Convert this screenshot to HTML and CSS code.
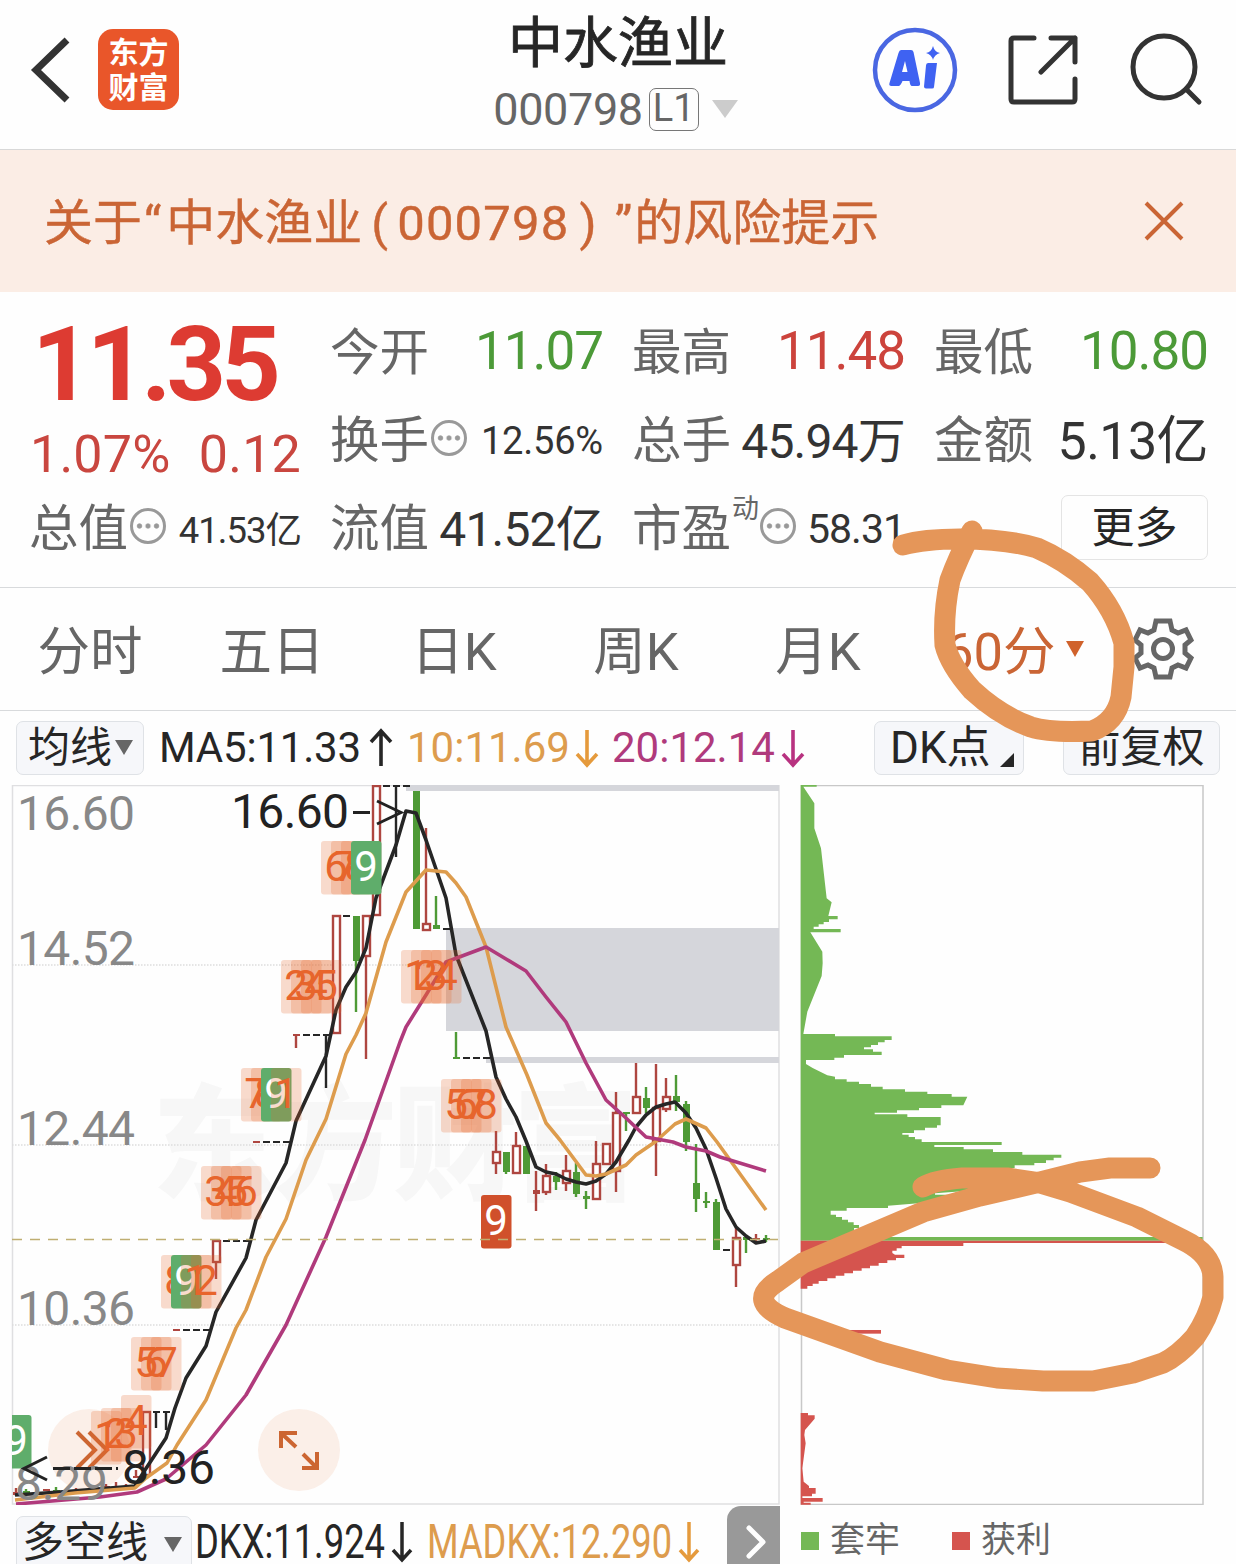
FILE: index.html
```html
<!DOCTYPE html>
<html lang="zh-CN">
<head>
    <meta charset="UTF-8">
    <meta name="viewport" content="width=device-width, initial-scale=1.0">
    <title>中水渔业 000798</title>
    <link rel="stylesheet" href="styles.css">
</head>
<body>
    <div class="page">
        <header class="header">
            <div class="header-left">
                <svg class="back" width="44" height="70" viewBox="0 0 44 70"><path d="M41 5 10 35l31 30" /></svg>
                <div class="logo"><span>东方</span><span>财富</span></div>
            </div>
            <div class="header-title">
                <h1>中水渔业</h1>
                <div class="code">
                    <span class="code-number">000798</span>
                    <span class="level">L1</span>
                    <svg width="26" height="18" viewBox="0 0 26 18"><path d="M0 0h26L13 18z" fill="#ccc" /></svg>
                </div>
            </div>
            <div class="header-right">
                <svg width="86" height="86" viewBox="0 0 86 86">
                    <circle cx="43" cy="43" r="40" fill="none" stroke="#4a67e2" stroke-width="4.5" />
                    <path d="M29 23h10q2 0 2.500 2l6.500 31q.500 3-2 3h-6q-2 0-2.500-5h-7q-2 5-4 5h-7q-3 0-2-3l9-30q1-3 2.500-3zm4 11-3 11h5.500z" fill="#3f62f2" fill-rule="evenodd" />
                    <path d="M56 36h9l-3 24q0 1.500-2 1.500h-6q-2 0-2-2l2-21q0-2.500 2-2.500z" fill="#3f62f2" />
                    <path d="M61 19q1.500 6 7 7-5.500 1.500-7 7-1.500-5.500-7-7 5.500-1 7-7z" fill="#3f62f2" />
                </svg>
                <svg class="share" width="72" height="72" viewBox="0 0 72 72">
                    <path d="M27 4H7q-3 0-3 3v58q0 3 3 3h58q3 0 3-3V45M44 4h24v24M68 4 34 38" />
                </svg>
                <svg class="search" width="74" height="74" viewBox="0 0 74 74">
                    <circle cx="35" cy="34" r="31" /><path d="m57 56 13 13" />
                </svg>
            </div>
        </header>

        <section class="notice">
            <p>关于<span class="open-quote">“</span>中水渔业<span class="paren">(</span><span class="notice-code">000798</span><span class="paren-end">)</span><span class="close-quote">”</span>的风险提示</p>
            <svg width="40" height="40" viewBox="0 0 40 40"><path d="m2 2 36 36M38 2 2 38" /></svg>
        </section>

        <section class="quote">
            <div class="price-block">
                <div class="price">11.35</div>
                <div class="change"><span>1.07%</span><span>0.12</span></div>
            </div>
            <div class="item"><label>今开</label><b class="green">11.07</b></div>
            <div class="item"><label>最高</label><b class="red">11.48</b></div>
            <div class="item"><label>最低</label><b class="green">10.80</b></div>
            <div class="item"><label>换手</label><i class="more-dot"></i><b class="small">12.56%</b></div>
            <div class="item"><label>总手</label><b class="medium">45.94万</b></div>
            <div class="item"><label>金额</label><b class="large">5.13亿</b></div>
            <div class="item"><label>总值</label><i class="more-dot"></i><b class="small tight">41.53亿</b></div>
            <div class="item"><label>流值</label><b class="medium">41.52亿</b></div>
            <div class="item"><label>市盈<sup>动</sup></label><i class="more-dot pe"></i><b class="small pe-value">58.31</b></div>
            <div class="item last"><button type="button" class="more">更多</button></div>
        </section>

        <nav class="tabs">
            <a>分时</a>
            <a>五日</a>
            <a>日K</a>
            <a>周K</a>
            <a>月K</a>
            <a class="active">60分<svg width="18" height="18" viewBox="0 0 18 18"><path d="M0 1h18L9 17z" fill="#d0622c" /></svg></a>
            <svg class="gear" width="62" height="62" viewBox="-31 -31 62 62">
                <path d="M-7-28H7L9-19 15-16 23-19 28-9 22-4V4L28 9 23 19 15 16 9 19 7 28H-7L-9 19-15 16-23 19-28 9-22 4V-4L-28-9-23-19-15-16-9-19z" />
                <circle r="9.500" />
            </svg>
        </nav>

        <div class="indicators">
            <button type="button" class="chip ma-chip"><span>均线</span><svg width="18" height="16" viewBox="0 0 18 16"><path d="M0 0h18L9 15z" fill="#666" /></svg></button>
            <span class="ma ma5">MA5:11.33</span>
            <svg class="arrow" width="24" height="40" viewBox="0 0 24 40"><path d="M12 38V3M2 14 12 3l10 11" stroke="#262626" /></svg>
            <span class="ma ma10">10:11.69</span>
            <svg class="arrow" width="24" height="40" viewBox="0 0 24 40"><path d="M12 2v35M2 26l10 11 10-11" stroke="#e59a3c" /></svg>
            <span class="ma ma20">20:12.14</span>
            <svg class="arrow" width="24" height="40" viewBox="0 0 24 40"><path d="M12 2v35M2 26l10 11 10-11" stroke="#b83280" /></svg>
            <button type="button" class="chip dk-chip"><span>DK点</span><svg width="14" height="14" viewBox="0 0 14 14"><path d="M14 0v14H0z" fill="#262626" /></svg></button>
            <button type="button" class="chip fq-chip">前复权</button>
        </div>

        <div class="charts">
            <svg class="kline" width="780" height="720" viewBox="0 785 780 720">
                <clipPath id="plot"><rect x="12" y="785" width="768" height="720" /></clipPath>
                <text class="watermark" x="152" y="1190" textLength="486">东方财富</text>
                <path class="frame" d="M12.500 785.500H779V1504H12.500z" />
                <path class="grid" d="M12 965H779M12 1145H779M12 1325H779" />
                <g fill="#d5d6db">
                    <rect x="406" y="785" width="373" height="6" />
                    <rect x="446" y="928" width="333" height="103" />
                    <rect x="486" y="1057" width="293" height="6" />
                </g>
                <g class="round-btn">
                    <circle cx="89" cy="1450" r="41" /><circle cx="299" cy="1450" r="41" />
                    <path d="m77 1432 18 18-18 18M89 1432l18 18-18 18M281 1448v-15h16M281 1433l15 14M302 1468h15v-16M317 1468l-14-14" />
                </g>
                <g id="candles"></g>
                <polyline class="line" stroke="#262626" points="15,1495 60,1492 135,1486 145,1470 166,1438 175,1408 186,1378 206,1346 216,1312 246,1258 256,1220 286,1163 296,1121 326,1056 336,1010 346,987 356,972 366,948 376,898 396,845 406,811 416,813 426,840 446,898 456,955 486,1031 496,1077 506,1099 516,1117 526,1141 536,1167 546,1172 556,1174 566,1179 576,1182 586,1184 596,1181 606,1174 616,1162 629,1140 636,1127 646,1115 656,1107 666,1104 675,1102 686,1113 696,1128 706,1149 716,1178 726,1209 736,1227 746,1236 756,1243 766,1241" />
                <polyline class="line" stroke="#dd9c4d" points="15,1500 75,1493 135,1488 146,1478 167,1463 177,1445 206,1400 236,1328 246,1310 266,1257 286,1219 306,1160 326,1119 346,1054 356,1035 366,1013 386,942 406,892 426,870 446,872 456,883 466,897 486,947 506,1027 527,1075 546,1123 560,1140 586,1175 596,1176 606,1174 626,1165 636,1155 655,1142 675,1124 686,1119 706,1128 717,1142 766,1210" />
                <polyline class="line" stroke="#b03a7c" points="16,1504 100,1497 137,1492 166,1479 206,1445 246,1395 286,1325 326,1237 365,1140 400,1042 406,1027 426,995 446,962 486,947 506,959 526,971 546,997 566,1022 586,1063 606,1100 626,1118 646,1137 673,1142 686,1147 706,1151 720,1157 766,1171" />
                <g id="signals" clip-path="url(#plot)"></g>
                <path class="last-price" d="M12 1239.500H779" />
                <g class="axis">
                    <text x="17" y="829.500" textLength="118">16.60</text>
                    <text x="17" y="964.500" textLength="118">14.52</text>
                    <text x="17" y="1144.500" textLength="118">12.44</text>
                    <text x="17" y="1324.500" textLength="118">10.36</text>
                    <text x="15" y="1500" textLength="93">8.29</text>
                </g>
                <g class="extreme">
                    <text x="231" y="828" textLength="118">16.60</text>
                    <text x="122" y="1484" textLength="93">8.36</text>
                    <path d="M353 812.500h17M377 801l24 11.500L377 824M47 1457l-23 11.500L47 1480" />
                    <path d="M53 1468.500h65" stroke-dasharray="17 4" />
                </g>
            </svg>
            <svg class="profile" width="456" height="720" viewBox="780 785 456 720">
                <path d="M801.500 785.500H1203V1504.500H801.500z" fill="none" stroke="#c8c8c8" stroke-width="1.500" />
                <!-- cost distribution, drawn on a grid three times finer than the panel -->
                <g transform="translate(780 780) scale(.33333)">
                    <polygon fill="#74b855" points="62,15 110,15 110,20 70,20 103,70 103,145 123,205 140,355 155,367 145,408 173,408 173,418 147,418 147,426 131,426 131,433 116,433 116,440 101,440 101,447 182,447 182,457 91,457 127,515 128,550 125,588 82,695 70,762 165,762 165,769 335,769 335,780 314,780 314,787 294,787 294,795 273,795 273,802 252,802 252,808 279,808 279,815 305,815 305,825 192,825 192,833 163,833 163,840 78,840 78,852 98,864 142,886 165,890 165,898 200,898 200,905 237,905 237,912 273,912 273,920 308,920 308,928 375,928 375,935 442,935 442,942 515,942 515,950 562,950 550,976 484,976 484,984 417,984 417,991 351,991 351,998 284,998 284,1003 382,1003 382,1011 482,1011 482,1036 471,1036 471,1043 435,1043 435,1051 402,1051 402,1059 367,1059 367,1064 386,1064 386,1071 405,1071 405,1078 425,1078 425,1086 665,1086 665,1095 463,1095 463,1101 551,1101 551,1108 639,1108 639,1116 727,1116 727,1124 844,1124 844,1133 821,1133 821,1141 798,1141 798,1149 763,1149 763,1156 704,1156 704,1164 640,1170 600,1226 567,1226 567,1232 465,1240 465,1244 507,1244 507,1252 415,1270 324,1277 324,1284 200,1284 200,1292 152,1292 152,1304 168,1304 168,1311 186,1311 186,1319 204,1319 204,1327 221,1327 221,1335 237,1335 237,1344 222,1344 222,1352 230,1371 1268,1371 1268,1382 62,1382" />
                    <g fill="#d5544e">
                        <polygon points="62,1382 1268,1382 1268,1389 550,1389 550,1398 365,1398 365,1405 350,1405 350,1412 337,1412 337,1419 345,1424 373,1424 373,1434 348,1434 348,1441 322,1441 322,1449 296,1449 296,1457 270,1457 270,1465 245,1465 245,1472 219,1472 219,1480 193,1480 193,1487 167,1487 167,1495 142,1495 142,1503 116,1503 116,1511 98,1511 98,1518 82,1518 82,1526 62,1526" />
                        <rect x="62" y="1650" width="241" height="11" />
                        <polygon points="62,1899 84,1899 84,1906 104,1906 104,1916 75,1950 73,1965 77,1990 67,2065 71,2105 87,2118 87,2124 107,2124 107,2141 96,2141 96,2149 67,2149 67,2154 128,2154 128,2165 71,2165 71,2168 92,2168 92,2174 62,2174" />
                    </g>
                </g>
            </svg>
        </div>

        <footer class="footer">
            <button type="button" class="chip dkx-chip"><span>多空线</span><svg width="18" height="16" viewBox="0 0 18 16"><path d="M0 0h18L9 15z" fill="#666" /></svg></button>
            <svg class="dkx" width="535" height="59" viewBox="192 1505 535 59">
                <text x="195" y="1558" textLength="190" lengthAdjust="spacingAndGlyphs" fill="#262626">DKX:11.924</text>
                <path d="M402 1522v37M393 1550l9 10 9-10" stroke="#262626" />
                <text x="427" y="1558" textLength="245" lengthAdjust="spacingAndGlyphs" fill="#dd9c4d">MADKX:12.290</text>
                <path d="M689 1522v37M680 1550l9 10 9-10" stroke="#e59a3c" />
            </svg>
            <div class="next"><svg width="20" height="34" viewBox="0 0 20 34"><path d="m3 3 14 14L3 31" /></svg></div>
            <div class="legend">
                <span><i class="box box-green"></i>套牢</span>
                <span><i class="box box-red"></i>获利</span>
            </div>
        </footer>

        <svg class="marker" width="1236" height="1564" viewBox="0 0 1236 1564">
            <path d="M903 545Q924 539 960 539 1007 539 1037 548 1065 560 1090 582 1115 610 1124 643V667L1121 697Q1116 722 1092 731 1050 733 1031 727 1000 716 972 690 950 665 945 645 943 613 950 580 958 558 972 531" />
            <path d="M923 1187Q935 1180 962 1178H1007L1040 1183 1070 1192 1137 1217 1183 1240Q1212 1254 1213 1277V1297Q1208 1318 1195 1337 1178 1356 1163 1363L1133 1373 1093 1381H1043L997 1378 947 1370 880 1352 785 1318Q746 1301 778 1281L803 1263 923 1212 980 1196 1040 1182 1080 1172 1110 1168H1150" />
        </svg>
    </div>
    <script src="chart.js"></script>
</body>
</html>
```

FILE: styles.css
```css
* { box-sizing: border-box; }
body { margin: 0; background: #fefefe; color: #333; font-family: Roboto, "Noto Sans CJK SC", sans-serif; }
button { font-family: inherit; color: #262626; }
svg { display: block; flex: none; }
.page { position: relative; width: 1236px; height: 1564px; overflow: hidden; }

/* header */
.header { height: 150px; display: grid; grid-template-columns: 1fr auto 1fr; border-bottom: 1px solid #d8d8d8; }
.header-left { display: flex; align-items: center; gap: 28px; padding: 0 0 10px 26px; }
.back path { fill: none; stroke: #333; stroke-width: 7; }
.logo { width: 81px; height: 81px; border-radius: 15px; background: #e9562a; color: #fff; font-size: 30px; font-weight: 700; line-height: 35px; display: flex; flex-direction: column; align-items: center; justify-content: center; }
.header-title { display: flex; flex-direction: column; align-items: center; padding-right: 3px; }
.header-title h1 { margin: 4px 0 0 3px; font-size: 55px; font-weight: 400; line-height: 79px; color: #262626; -webkit-text-stroke: 0.8px #262626; }
.code { display: flex; align-items: center; height: 52px; margin-right: 2px; color: #666; }
.code-number { font-size: 45px; letter-spacing: -0.4px; }
.level { width: 50px; height: 43px; margin: 0 13px 0 6px; border: 1.5px solid #777; border-radius: 7px; font-size: 38px; line-height: 38px; text-align: center; }
.header-right { display: flex; align-items: center; justify-content: flex-end; padding: 0 33px 10px 0; }
.share { margin: 0 50px 0 49px; }
.share path, .search { fill: none; stroke: #333; stroke-width: 5; stroke-linecap: round; stroke-linejoin: round; }

/* risk notice */
.notice { height: 142px; display: flex; align-items: center; justify-content: space-between; padding: 0 52px 0 44px; background: #fbede5; color: #ca6535; }
.notice p { margin: 0 0 5px; font-size: 49px; -webkit-text-stroke: 0.4px #ca6535; white-space: nowrap; }
.notice-code { letter-spacing: 1.2px; }
.open-quote { margin: 0 5px 0 2px; }
.paren { margin: 0 9px 0 9px; }
.paren-end { margin: 0 18px 0 10px; }
.close-quote { margin-right: 2px; }
.notice path { stroke: #ca6535; stroke-width: 4; }

/* quote */
.quote { height: 296px; display: grid; grid-template-columns: 271px 272px 272px 273px; grid-template-rows: 88px 88px 88px; column-gap: 30px; padding: 15px 28px 0 30px; border-bottom: 1px solid #d8dadc; }
.price-block { grid-row: span 2; color: #dd3b32; }
.price { padding: 2px 0 0 2px; font-size: 104px; font-weight: 700; line-height: 112px; letter-spacing: -5px; }
.change { display: flex; justify-content: space-between; font-size: 52px; line-height: 68px; color: #c9463f; letter-spacing: 0.2px; }
.item { display: flex; align-items: center; }
.item label { margin-bottom: 5px; font-size: 49.5px; color: #666; position: relative; left: -1px; white-space: nowrap; }
.item sup { position: absolute; left: 100px; top: 0; font-size: 27px; line-height: 40px; }
.item b { margin-left: auto; font-size: 53px; font-weight: 400; letter-spacing: -1px; white-space: nowrap; }
.item .small { font-size: 38px; letter-spacing: -0.2px; margin-top: 3px; }
.item .tight { margin-bottom: 3px; font-size: 36.5px; letter-spacing: -1px; }
.item .medium { margin-bottom: 5px; font-size: 48px; letter-spacing: -0.8px; }
.item .large { margin-bottom: 5px; font-size: 52px; letter-spacing: -0.6px; }
.item .pe-value { font-size: 41px; letter-spacing: -1px; }
.green { color: #4c9a38; }
.red { color: #cc433c; }
.more-dot { width: 36px; height: 36px; margin: 0 0 2px 1px; border: 3px solid #999; border-radius: 50%; background: radial-gradient(circle, #999 2.200px, transparent 3px) center / 8.500px 30px repeat-x content-box; padding: 0 2px; }
.more-dot.pe { margin-left: 28px; }
.last { justify-content: flex-end; }
.more { width: 147px; height: 65px; margin-top: 1px; border: 1.5px solid #e4e4e4; border-radius: 7px; background: transparent; font-size: 43px; line-height: 58px; padding: 0; }

/* period tabs */
.tabs { height: 123px; display: flex; align-items: center; border-bottom: 1px solid #d8dadc; color: #666; font-size: 52.5px; }
.tabs a { width: 182px; padding: 0 2px 4px 0; text-align: center; }
.tabs .active { width: 223px; padding-left: 34px; display: flex; align-items: center; gap: 10px; color: #ca6535; }
.active svg { margin-top: 4px; }
.gear { fill: none; stroke: #666; stroke-width: 5; margin-left: -1px; }

/* moving averages */
.indicators { height: 74px; display: flex; align-items: center; padding: 0 16px; }
.chip { flex: none; height: 54px; display: flex; align-items: center; padding: 0; border: 1.5px solid #dfe2e6; border-radius: 7px; background: #f6f7fa; font-size: 42px; line-height: 50px; }
.ma-chip { width: 128px; padding-left: 11px; gap: 3px; }
.ma { font-size: 42px; line-height: 50px; white-space: nowrap; }
.ma5 { width: 210px; margin-left: 15px; color: #262626; letter-spacing: -0.2px; }
.ma10 { width: 168px; margin-left: 14px; color: #dd9c4d; }
.ma20 { width: 169px; margin-left: 13px; color: #b03a7c; }
.arrow path { fill: none; stroke-width: 3.600; }
.dk-chip { width: 150px; margin-left: 69px; padding-left: 15px; font-size: 44px; }
.dk-chip svg { margin: 24px 0 0 10px; }
.fq-chip { width: 157px; margin-left: auto; justify-content: center; }

/* charts */
.charts { display: flex; height: 720px; }
.kline text { font-size: 48px; }
.kline .watermark { font-size: 125px; font-weight: 900; fill: #f7f7f7; }
.frame { fill: none; stroke: #dfdfe1; stroke-width: 1.500; }
.grid { stroke: #ddd; stroke-width: 1.500; stroke-dasharray: 1.500 1.500; }
.line { fill: none; stroke-width: 3.600; stroke-linejoin: round; }
.last-price { stroke: #bfae72; stroke-width: 1.300; stroke-dasharray: 10 8; }
.axis { fill: #888; }
.extreme { fill: #222; }
.extreme path { fill: none; stroke: #222; stroke-width: 3; }
.round-btn circle { fill: #fbefe8; }
.round-btn path { fill: none; stroke: #cc6632; stroke-width: 4; }
.kline .signal { font-size: 42px; text-anchor: middle; }

/* footer */
.footer { height: 59px; display: flex; }
.dkx-chip { width: 176px; height: 60px; margin: 11px 0 0 16px; padding: 0 0 6px 5px; gap: 16px; }
.dkx-chip svg { margin-top: 4px; }
.dkx text { font-size: 48px; }
.dkx path { fill: none; stroke-width: 3.500; }
.next { width: 53px; padding: 19px 0 0 19px; margin-top: 1px; border-top-left-radius: 14px; background: #999; }
.next path { fill: none; stroke: #fff; stroke-width: 5; stroke-linecap: round; stroke-linejoin: round; }
.legend { display: flex; gap: 52px; padding: 13px 0 0 21px; font-size: 35px; line-height: 50px; color: #666; }
.legend span { display: flex; align-items: center; gap: 11px; }
.box { width: 18px; height: 18px; }
.box-green { background: #74b855; }
.box-red { background: #d5544e; }

/* hand-drawn marks lie over everything */
.marker { position: absolute; left: 0; top: 0; }
.marker path { fill: none; stroke: #e59659; stroke-width: 21; stroke-linecap: round; stroke-linejoin: round; }
```

FILE: chart.js
```js
const SVG_NS = 'http://www.w3.org/2000/svg';
const colors = { r: '#ae4640', g: '#4e9a36', k: '#262626' };

// [x, type, wick top, body top, body bottom, wick bottom]
const candles = [
    [16, 'r', 1488, 1492, 1495, 1496], [26, 'g', 1489, 1491, 1493, 1495], [46, 'r', 1489, 1489, 1491, 1491],
    [56, 'g', 1487, 1490, 1492, 1493], [76, 'r', 1488, 1490, 1492, 1492], [106, 'r', 1484, 1486, 1488, 1488],
    [116, 'r', 1482, 1486, 1488, 1490], [126, 'r', 1484, 1486, 1488, 1488], [136, 'r', 1470, 1476, 1478, 1478],
    [146, 'r', 1411, 1411, 1475, 1475], [156, 'k', 1411, 1411, 1413, 1428], [166, 'k', 1411, 1411, 1413, 1430],
    [176, 'r', 1329, 1329, 1331, 1331],
    [216, 'r', 1240, 1240, 1262, 1279], [256, 'r', 1141, 1141, 1143, 1143],
    [296, 'r', 1034, 1034, 1036, 1048], [326, 'k', 1034, 1034, 1036, 1088],
    [336, 'r', 915, 915, 1033, 1033], [356, 'g', 916, 916, 961, 1012], [366, 'r', 915, 915, 956, 1059],
    [376, 'r', 785, 785, 915, 915], [396, 'k', 785, 785, 787, 857],
    [416, 'g', 791, 791, 929, 929], [426, 'r', 828, 923, 930, 930], [436, 'g', 896, 925, 929, 929],
    [456, 'g', 1032, 1057, 1059, 1059], [496, 'r', 1131, 1151, 1163, 1174], [506, 'g', 1152, 1152, 1172, 1174],
    [516, 'r', 1132, 1145, 1173, 1174], [526, 'g', 1146, 1146, 1174, 1174], [536, 'r', 1171, 1190, 1194, 1211],
    [546, 'r', 1164, 1175, 1192, 1195], [556, 'g', 1172, 1176, 1182, 1190], [566, 'r', 1155, 1170, 1183, 1191],
    [576, 'g', 1163, 1172, 1194, 1197], [586, 'g', 1191, 1196, 1199, 1209], [596, 'r', 1141, 1163, 1199, 1199],
    [606, 'r', 1143, 1143, 1164, 1165], [616, 'r', 1092, 1112, 1171, 1192], [626, 'g', 1112, 1112, 1114, 1131],
    [636, 'r', 1063, 1096, 1113, 1113], [646, 'g', 1087, 1098, 1108, 1113], [656, 'r', 1064, 1107, 1141, 1176],
    [666, 'r', 1078, 1096, 1109, 1112], [676, 'g', 1075, 1096, 1102, 1111], [686, 'g', 1101, 1104, 1142, 1151],
    [696, 'g', 1144, 1183, 1199, 1212], [706, 'g', 1192, 1201, 1203, 1208], [716, 'g', 1199, 1202, 1250, 1250],
    [736, 'r', 1228, 1237, 1265, 1287], [746, 'g', 1237, 1237, 1240, 1253],
    [756, 'r', 1234, 1238, 1240, 1242], [766, 'g', 1235, 1238, 1240, 1242]
];

// flat candles: first x, last x, y
const flats = [
    [186, 206, 1330], [226, 246, 1241], [266, 286, 1142], [306, 316, 1035], [346, 346, 916],
    [386, 386, 786], [406, 406, 786], [446, 446, 929], [466, 486, 1058], [726, 726, 1250]
];

// [left, top, digit, colour]
const signals = [
    [1, 1415, '9', 'green'],
    [91, 1411, '1'], [101, 1408, '2'], [111, 1408, '3'], [121, 1395, '4'],
    [131, 1337, '5'], [141, 1337, '6'], [151, 1337, '7'],
    [161, 1255, '8'], [171, 1255, '9', 'green'], [181, 1255, '1'], [191, 1255, '2'],
    [201, 1166, '3'], [211, 1166, '4'], [221, 1166, '5'], [231, 1166, '6'],
    [241, 1068, '7'], [251, 1068, '8'], [261, 1068, '9', 'green'], [271, 1068, '1'],
    [281, 960, '2'], [291, 960, '3'], [301, 960, '4'], [311, 960, '5'],
    [321, 841, '6'], [331, 841, '7'], [341, 841, '8'], [351, 841, '9', 'green'],
    [401, 950, '1'], [411, 950, '2'], [421, 950, '3'], [431, 950, '4'],
    [441, 1079, '5'], [451, 1079, '6'], [461, 1079, '7'], [471, 1079, '8'],
    [481, 1195, '9', 'red']
];

function add(parent, name, attrs, text) {
    const node = document.createElementNS(SVG_NS, name);
    for (const key in attrs) node.setAttribute(key, attrs[key]);
    if (text) node.textContent = text;
    parent.appendChild(node);
}

const candleLayer = document.getElementById('candles');
candles.forEach(([x, type, high, top, bottom, low]) => {
    const color = colors[type];
    if (type === 'r' && bottom - top > 4) {
        add(candleLayer, 'path', { d: `M${x} ${high}V${top}M${x} ${bottom}V${low}`, stroke: color, 'stroke-width': 2.4 });
        add(candleLayer, 'rect', { x: x - 3, y: top + 1, width: 7, height: bottom - top - 1, fill: '#fff', stroke: color, 'stroke-width': 2.4 });
    } else {
        add(candleLayer, 'path', { d: `M${x} ${high}V${low}`, stroke: color, 'stroke-width': 2.4 });
        add(candleLayer, 'rect', { x: x - 3, y: top, width: 7, height: bottom - top, fill: color });
    }
});
flats.forEach(([from, to, y]) => {
    for (let x = from; x <= to; x += 10) {
        add(candleLayer, 'rect', { x: x - 3, y: y - 1, width: 7, height: 2, fill: colors.k });
    }
});

const signalLayer = document.getElementById('signals');
const fills = { green: '#5fad6b', red: '#d0502b' };
signals.forEach(([x, y, digit, color]) => {
    add(signalLayer, 'rect', { x: x, y: y, width: 30.5, height: 53.5, rx: 3, fill: fills[color] || '#e8672c', 'fill-opacity': color ? 1 : 0.24 });
    add(signalLayer, 'text', { x: x + 15, y: y + 39.5, class: 'signal', fill: color ? '#fff' : '#e8642c' }, digit);
});
```
